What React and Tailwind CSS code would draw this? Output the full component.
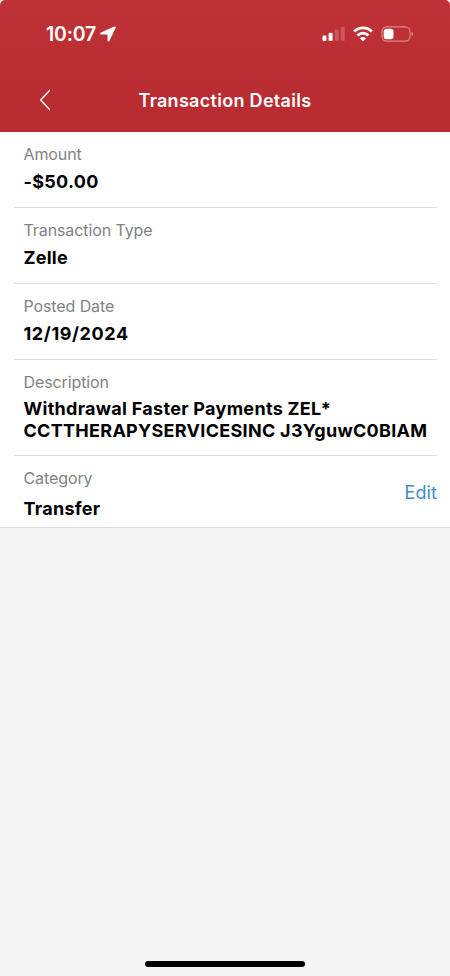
import React from 'react';

const details = [
  { label: 'Amount', value: '-$50.00', tracking: 'tracking-[0.3px]' },
  { label: 'Transaction Type', value: 'Zelle', tracking: 'tracking-[0.25px]' },
  { label: 'Posted Date', value: '12/19/2024', tracking: 'tracking-[0.6px]' },
];

function StatusBar() {
  return (
    <div className="flex h-[68px] items-center justify-between pl-[46px] pr-[36px]">
      <div className="flex items-center gap-1">
        <span className="text-[19.5px] font-semibold leading-6 tracking-[-0.2px]">10:07</span>
        <svg width="16" height="16" viewBox="0 0 16 16" fill="currentColor">
          <path d="M14.3.5.9 6.5c-1 .5-.8 1.900.3 1.900h5.700c.4 0 .6.2.6.6v5.500c0 1.200 1.500 1.400 2 .3L15.600 2c.5-1-.3-1.900-1.300-1.500z" />
        </svg>
      </div>
      <div className="flex items-center">
        <svg width="24" height="16" viewBox="0 0 24 16" fill="currentColor">
          <rect x="0.5" y="9.5" width="4" height="5.5" rx="1.2" />
          <rect x="6.6" y="6.8" width="4" height="8.2" rx="1.2" />
          <rect x="12.7" y="3.6" width="4" height="11.4" rx="1.2" opacity="0.2" />
          <rect x="18.8" y="0.8" width="4" height="14.2" rx="1.2" opacity="0.2" />
        </svg>
        <svg className="ml-[7px]" width="20" height="16" viewBox="0 0 20 16" fill="none" stroke="currentColor" strokeWidth="2.8">
          <path d="M1.2 5.6a12.4 12.4 0 0 1 17.6 0" />
          <path d="M4.5 9.4a7.8 7.8 0 0 1 11 0" />
          <path d="M10 15.4 6.9 12.3a4.4 4.4 0 0 1 6.2 0z" fill="currentColor" stroke="none" />
        </svg>
        <svg className="ml-[8px]" width="33" height="16" viewBox="0 0 33 16">
          <rect x="1" y="0.9" width="28" height="14.2" rx="4.6" fill="none" stroke="white" strokeOpacity="0.45" strokeWidth="1.1" />
          <rect x="2.7" y="2.7" width="9.8" height="10.6" rx="2.8" fill="white" />
          <path d="M30.6 5.7c1.8.7 1.8 3.9 0 4.6z" fill="white" fillOpacity="0.5" />
        </svg>
      </div>
    </div>
  );
}

function Label({ children }) {
  return <p className="text-base leading-[22px] tracking-[-0.1px] text-[#828282]">{children}</p>;
}

export default function App() {
  return (
    <div className="flex h-[976px] w-[450px] flex-col overflow-hidden bg-white font-['Inter',sans-serif] text-black">
      <header className="rounded-t-[5px] bg-linear-to-b from-[#bf3238] via-[#ba2d33] to-[#b72b31] text-white">
        <StatusBar />
        <div className="grid h-16 grid-cols-[90px_1fr_90px] items-center">
          <button aria-label="Back" className="pl-[38px]">
            <svg width="14" height="22" viewBox="0 0 14 22" fill="none" stroke="currentColor" strokeWidth="1.4" strokeLinecap="round" strokeLinejoin="round">
              <path d="M11.5 1.5 2.7 11l8.8 9.5" />
            </svg>
          </button>
          <h1 className="pt-0.5 text-center text-lg font-semibold leading-6 tracking-[0.3px]">Transaction Details</h1>
        </div>
      </header>

      <main className="flex grow flex-col bg-[#f4f4f4]">
        <section className="border-b border-[#d9d9d9] bg-white pl-3.5 pr-[13px]">
          {details.map((item) => (
            <div key={item.label} className="h-[76px] border-b border-[#dedede] pl-[9.5px] pt-[11px]">
              <Label>{item.label}</Label>
              <p className={`mt-1.5 text-lg font-bold leading-[22px] ${item.tracking}`}>{item.value}</p>
            </div>
          ))}
          <div className="h-24 border-b border-[#dedede] pl-[9.5px] pt-[11px]">
            <Label>Description</Label>
            <p className="mt-[5px] whitespace-nowrap text-lg font-bold leading-[22px] tracking-[0.29px]">
              <span className="block">Withdrawal Faster Payments ZEL*</span>
              <span className="block">CCTTHERAPYSERVICESINC J3YguwC0BIAM</span>
            </p>
          </div>
          <div className="flex h-[71px] items-center justify-between pl-[9.5px]">
            <div className="self-start pt-[11px]">
              <Label>Category</Label>
              <p className="mt-[9px] text-lg font-bold leading-[22px] tracking-[0.29px]">Transfer</p>
            </div>
            <button className="pt-[3px] text-lg leading-6 tracking-[0.1px] text-[#428dcc]">Edit</button>
          </div>
        </section>

        <div className="mx-auto mb-[9px] mt-auto h-[6px] w-[160px] rounded-full bg-black" />
      </main>
    </div>
  );
}
